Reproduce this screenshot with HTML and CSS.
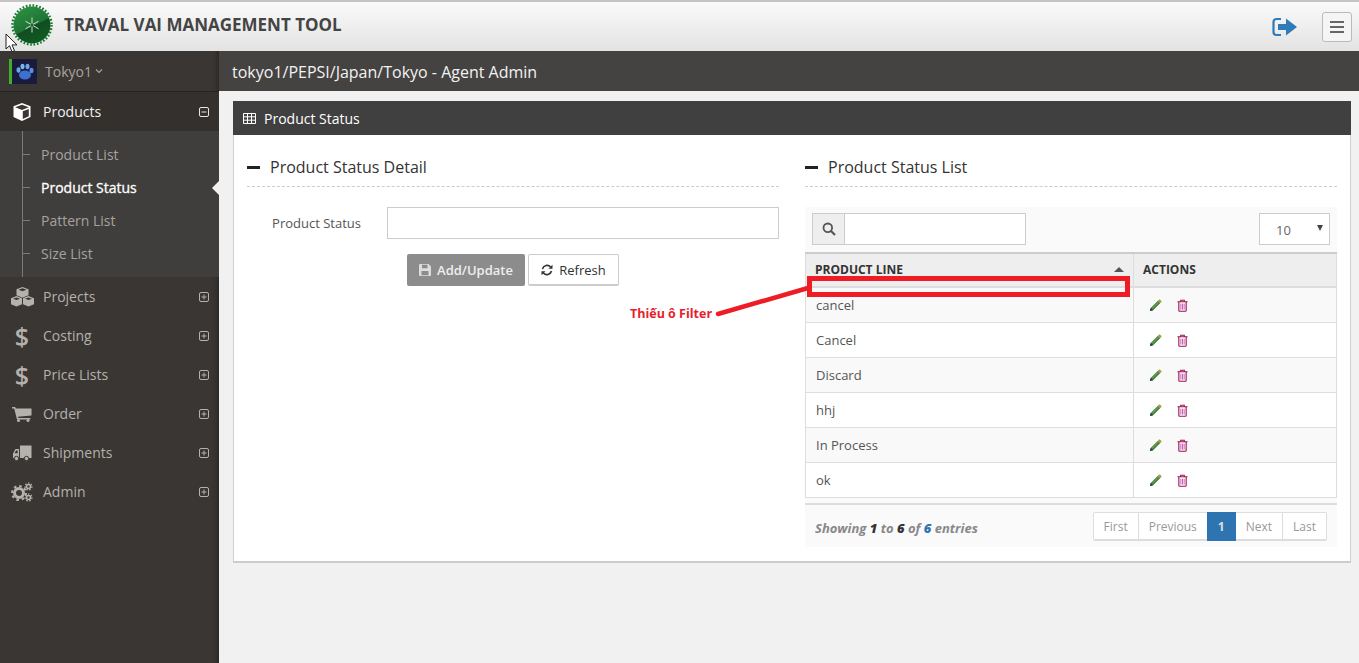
FILE: index.html
```html
<!DOCTYPE html>
<html lang="en">

<head>
  <meta charset="UTF-8">
  <title>Product Status</title>
  <link rel="stylesheet" href="styles.css">
</head>

<body>
  <svg class="defs" width="0" height="0">
    <symbol id="i-plus" viewBox="0 0 10 10">
      <rect x="0.5" y="0.5" width="9" height="9" rx="1.5" fill="none" stroke="currentColor" />
      <path d="M2.5 5h5M5 2.5v5" stroke="currentColor" fill="none" />
    </symbol>
    <symbol id="i-pencil" viewBox="0 0 14 14">
      <path d="M1 13l.8-3.4L9.6 1.8l2.6 2.6-7.8 7.8z" fill="#3c7a3e" />
      <path d="M3 9.5l6.8-6.8 1 1L4 10.5z" fill="#6f9a4a" />
      <path d="M9.6 1.8l1-1c.4-.4 1-.4 1.4 0l1.2 1.2c.4.4.4 1 0 1.4l-1 1z" fill="#a8a03c" />
      <path d="M1 13l.8-3.4 2.6 2.6z" fill="#24452a" />
    </symbol>
    <symbol id="i-trash" viewBox="0 0 12 14">
      <path d="M.5 3h11M4 3V1.2h4V3" fill="none" stroke="#a0124e" stroke-width="1.1" />
      <path d="M2 3.2v9.2c0 .5.3.9.8.9h6.4c.5 0 .8-.4.8-.9V3.2" fill="none" stroke="#a0124e" stroke-width="1.2" />
      <path d="M4.2 5v6.5M6 5v6.5M7.8 5v6.5" stroke="#c054b4" stroke-width="1" />
    </symbol>
  </svg>

  <header class="topbar">
    <svg class="logo" width="46" height="46" viewBox="0 0 46 46">
      <defs>
        <linearGradient id="badge" x1="0.2" y1="0" x2="0.7" y2="1">
          <stop offset="0" stop-color="#2b9142" />
          <stop offset="0.55" stop-color="#1f7434" />
          <stop offset="0.56" stop-color="#114d20" />
          <stop offset="1" stop-color="#0f5c22" />
        </linearGradient>
      </defs>
      <circle cx="23" cy="23" r="18.5" fill="url(#badge)" />
      <circle cx="23" cy="23" r="19.5" fill="none" stroke="#1b7a33" stroke-width="2.5" stroke-dasharray="1.7 1.7" />
      <path d="M23 15.5v15M16.5 19.2l13 7.6M16.5 26.8l13-7.6" stroke="#d4dfd5" stroke-width="1" />
      <circle cx="23" cy="23" r="1.5" fill="#2a5a34" />
    </svg>
    <h1 class="brand">TRAVAL VAI MANAGEMENT TOOL</h1>
    <div class="topbar-actions">
      <svg class="signout" width="26" height="20" viewBox="0 0 26 20">
        <path d="M9 2H4.5A3 3 0 0 0 1.5 5v10a3 3 0 0 0 3 3H9" fill="none" stroke="#2f7ab8" stroke-width="2.2" />
        <path d="M6 7h8V1.5L25 10 14 18.5V13H6z" fill="#2f7ab8" />
      </svg>
      <button class="menu-btn">
        <span></span><span></span><span></span>
      </button>
    </div>
  </header>

  <div class="layout">
    <aside class="sidebar">
      <div class="user">
        <svg class="avatar" width="25" height="25" viewBox="0 0 25 25">
          <rect width="25" height="25" fill="#1a1a3c" />
          <ellipse cx="13" cy="16" rx="6" ry="4.5" fill="#3f6fd0" />
          <ellipse cx="6.5" cy="11" rx="2" ry="2.8" fill="#6aa8e8" />
          <ellipse cx="10.5" cy="7.5" rx="2" ry="2.8" fill="#7ab8f0" />
          <ellipse cx="15.5" cy="7.5" rx="2" ry="2.8" fill="#6aa8e8" />
          <ellipse cx="19.5" cy="11.5" rx="2" ry="2.8" fill="#5a90dc" />
        </svg>
        <span class="user-name">Tokyo1</span>
        <svg class="chevron" width="8" height="6" viewBox="0 0 8 6">
          <path d="M1 1.5l3 3 3-3" fill="none" stroke="#a8a4a0" stroke-width="1.2" />
        </svg>
      </div>

      <nav>
        <div class="nav-item nav-open">
          <span class="nav-icon">
            <svg width="22" height="20" viewBox="0 0 22 20">
              <path d="M11 1l8.5 3.3v10.800L11 19l-8.5-3.900V4.300z" fill="#fff" />
              <path d="M4.200 5.200L11 7.900l6.800-2.700L11 2.800zM11.800 9.300v7.700l6-2.800V6.900z" fill="#3a3633" />
            </svg>
          </span>
          <span class="nav-label">Products</span>
          <svg class="nav-toggle" width="10" height="10" viewBox="0 0 10 10">
            <rect x="0.5" y="0.5" width="9" height="9" rx="1.5" fill="none" stroke="currentColor" />
            <path d="M2.5 5h5" stroke="currentColor" />
          </svg>
        </div>
        <ul class="subnav">
          <li>Product List</li>
          <li class="active">Product Status</li>
          <li>Pattern List</li>
          <li>Size List</li>
        </ul>

        <div class="nav-item">
          <span class="nav-icon">
            <svg width="25" height="20" viewBox="0 0 25 20">
              <path d="M12.5 0l6 2.3v6l-6 2.4-6-2.4v-6z" fill="currentColor" />
              <path d="M6.5 9l5.5 2.2v6L6.5 19.5 1 17.2v-6zM18.5 9l5.5 2.2v6l-5.5 2.3-5.5-2.3v-6z" fill="currentColor" />
              <path d="M8.5 2.700l4 1.500 4-1.500-4-1.400zM3 11.700l3.500 1.400 3.500-1.400-3.500-1.300zM15 11.700l3.500 1.400 3.500-1.400-3.500-1.300z" fill="#3a3633" />
            </svg>
          </span>
          <span class="nav-label">Projects</span>
          <svg class="nav-toggle" width="10" height="10"><use href="#i-plus" /></svg>
        </div>
        <div class="nav-item">
          <span class="nav-icon nav-dollar">$</span>
          <span class="nav-label">Costing</span>
          <svg class="nav-toggle" width="10" height="10"><use href="#i-plus" /></svg>
        </div>
        <div class="nav-item">
          <span class="nav-icon nav-dollar">$</span>
          <span class="nav-label">Price Lists</span>
          <svg class="nav-toggle" width="10" height="10"><use href="#i-plus" /></svg>
        </div>
        <div class="nav-item">
          <span class="nav-icon">
            <svg width="20" height="16" viewBox="0 0 20 16">
              <path d="M0 1h3.2l.6 1.600H19.500v7l-13.500 1.200.3 1.200h12v1.500H5L2.200 2.500H0z" fill="currentColor" />
              <circle cx="6.5" cy="14.5" r="1.5" fill="currentColor" />
              <circle cx="16" cy="14.5" r="1.5" fill="currentColor" />
            </svg>
          </span>
          <span class="nav-label">Order</span>
          <svg class="nav-toggle" width="10" height="10"><use href="#i-plus" /></svg>
        </div>
        <div class="nav-item">
          <span class="nav-icon">
            <svg width="20" height="16" viewBox="0 0 20 16">
              <path d="M8 .5h11.500v12.500H8zM7 4v9H1V8.500L3.500 4z" fill="currentColor" />
              <path d="M2.500 8.200l1.600-2.800h1.600v2.800z" fill="#3a3633" />
              <circle cx="4.5" cy="13.5" r="2.2" fill="currentColor" stroke="#3a3633" />
              <circle cx="14.5" cy="13.5" r="2.2" fill="currentColor" stroke="#3a3633" />
            </svg>
          </span>
          <span class="nav-label">Shipments</span>
          <svg class="nav-toggle" width="10" height="10"><use href="#i-plus" /></svg>
        </div>
        <div class="nav-item">
          <span class="nav-icon">
            <svg width="22" height="20" viewBox="0 0 22 20">
              <circle cx="8" cy="11" r="4.5" fill="none" stroke="currentColor" stroke-width="3" />
              <circle cx="8" cy="11" r="7" fill="none" stroke="currentColor" stroke-width="2" stroke-dasharray="2.6 2.9" />
              <circle cx="17.5" cy="4.5" r="2" fill="none" stroke="currentColor" stroke-width="1.6" />
              <circle cx="17.5" cy="4.5" r="3.5" fill="none" stroke="currentColor" stroke-width="1.2" stroke-dasharray="1.5 1.6" />
              <circle cx="17.5" cy="15.5" r="2" fill="none" stroke="currentColor" stroke-width="1.6" />
              <circle cx="17.5" cy="15.5" r="3.5" fill="none" stroke="currentColor" stroke-width="1.2" stroke-dasharray="1.5 1.6" />
            </svg>
          </span>
          <span class="nav-label">Admin</span>
          <svg class="nav-toggle" width="10" height="10"><use href="#i-plus" /></svg>
        </div>
      </nav>
    </aside>

    <main class="content">
      <div class="crumb">tokyo1/PEPSI/Japan/Tokyo - Agent Admin</div>

      <section class="panel">
        <div class="panel-head">
          <svg width="13" height="11" viewBox="0 0 13 11">
            <path d="M.5.5h12v10H.5zM.5 3.800h12M.5 7.200h12M4.500.5v10M8.500.5v10" fill="none" stroke="#fff" />
          </svg>
          Product Status
        </div>

        <div class="panel-body">
          <div class="col">
            <h2 class="col-title"><span class="dash"></span>Product Status Detail</h2>
            <div class="form-row">
              <label class="form-label" for="status">Product Status</label>
              <input class="form-input" id="status" type="text">
            </div>
            <div class="form-actions">
              <button class="btn btn-save">
                <svg width="12" height="12" viewBox="0 0 12 12">
                  <path d="M0 1a1 1 0 0 1 1-1h8.500L12 2.500V11a1 1 0 0 1-1 1H1a1 1 0 0 1-1-1z" fill="#ddd" />
                  <path d="M3 .8h5.500v3.400H3zM2.500 7h7v4.200h-7z" fill="#8c8c8c" />
                </svg>
                Add/Update
              </button>
              <button class="btn btn-refresh">
                <svg width="12" height="12" viewBox="0 0 12 12">
                  <path d="M1.500 5A4.700 4.700 0 0 1 9.600 3M10.500 7A4.700 4.700 0 0 1 2.400 9" fill="none" stroke="#333" stroke-width="1.6" />
                  <path d="M11.500.8v4h-4zM.5 11.200v-4h4z" fill="#333" />
                </svg>
                Refresh
              </button>
            </div>
          </div>

          <div class="col">
            <h2 class="col-title"><span class="dash"></span>Product Status List</h2>
            <div class="grid-box">
              <div class="grid-tools">
                <div class="search">
                  <span class="search-addon">
                    <svg width="14" height="14" viewBox="0 0 14 14">
                      <circle cx="5.8" cy="5.8" r="4.3" fill="none" stroke="#555" stroke-width="1.8" />
                      <path d="M9 9l4 4" stroke="#555" stroke-width="2.2" />
                    </svg>
                  </span>
                  <input class="search-input" type="text">
                </div>
                <div class="page-size">10<span class="caret"></span></div>
              </div>

              <table class="grid">
                <thead>
                  <tr>
                    <th class="col-name">PRODUCT LINE<span class="sort"></span></th>
                    <th>ACTIONS</th>
                  </tr>
                </thead>
                <tbody>
                  <tr>
                    <td>cancel</td>
                    <td class="actions"><svg width="13" height="13"><use href="#i-pencil" /></svg><svg width="11" height="13"><use href="#i-trash" /></svg></td>
                  </tr>
                  <tr>
                    <td>Cancel</td>
                    <td class="actions"><svg width="13" height="13"><use href="#i-pencil" /></svg><svg width="11" height="13"><use href="#i-trash" /></svg></td>
                  </tr>
                  <tr>
                    <td>Discard</td>
                    <td class="actions"><svg width="13" height="13"><use href="#i-pencil" /></svg><svg width="11" height="13"><use href="#i-trash" /></svg></td>
                  </tr>
                  <tr>
                    <td>hhj</td>
                    <td class="actions"><svg width="13" height="13"><use href="#i-pencil" /></svg><svg width="11" height="13"><use href="#i-trash" /></svg></td>
                  </tr>
                  <tr>
                    <td>In Process</td>
                    <td class="actions"><svg width="13" height="13"><use href="#i-pencil" /></svg><svg width="11" height="13"><use href="#i-trash" /></svg></td>
                  </tr>
                  <tr>
                    <td>ok</td>
                    <td class="actions"><svg width="13" height="13"><use href="#i-pencil" /></svg><svg width="11" height="13"><use href="#i-trash" /></svg></td>
                  </tr>
                </tbody>
              </table>

              <div class="grid-foot">
                <div class="info">Showing <b>1</b> to <b>6</b> of <b class="blue">6</b> entries</div>
                <div class="pager">
                  <a>First</a>
                  <a>Previous</a>
                  <a class="current">1</a>
                  <a>Next</a>
                  <a>Last</a>
                </div>
              </div>
            </div>
          </div>
        </div>
      </section>
    </main>
  </div>

  <!-- screenshot annotation drawn over the page -->
  <svg class="markup" width="540" height="60" viewBox="0 0 540 60">
    <rect x="217.5" y="3.5" width="318" height="16" fill="none" stroke="#ee1c25" stroke-width="5" />
    <path d="M126 39L216 13" stroke="#ee1c25" stroke-width="4.5" stroke-linecap="round" />
  </svg>
  <div class="markup-note">Thiếu ô Filter</div>

  <svg class="cursor" width="16" height="20" viewBox="0 0 16 20">
    <path d="M1 1v15l3.500-3.300 2.500 6 2.500-1-2.500-5.800h5z" fill="#fff" stroke="#222" />
  </svg>
</body>

</html>
```

FILE: styles.css
```css
* {
  box-sizing: border-box;
}

body {
  margin: 0;
  height: 663px;
  overflow: hidden;
  font-family: "Open Sans", sans-serif;
  font-size: 13px;
  color: #555;
  background-color: #f1f1f1;
}

.defs {
  display: block;
  height: 0;
}

.topbar {
  display: flex;
  align-items: center;
  height: 51px;
  padding-left: 9px;
  border-top: 2px solid #c4c4c4;
  background: linear-gradient(#fafafa, #e3e3e3);
}

.logo {
  flex: none;
  margin-bottom: 4px;
}

.brand {
  margin: 0 0 4px 9px;
  font-size: 17px;
  font-weight: 700;
  color: #444;
}

.topbar-actions {
  display: flex;
  align-items: center;
  margin-left: auto;
  padding-right: 7px;
  gap: 24px;
}

.menu-btn {
  display: flex;
  flex-direction: column;
  justify-content: center;
  gap: 3px;
  width: 30px;
  height: 30px;
  padding: 0 7px;
  border: 1px solid #bbb;
  border-radius: 3px;
  background-color: #f5f5f5;
}

.menu-btn span {
  display: block;
  height: 2px;
  background-color: #666;
}

.layout {
  display: flex;
  height: 612px;
}

.sidebar {
  flex: none;
  width: 219px;
  color: #b5b1ad;
  background-color: #3a3633;
  box-shadow: inset -6px 0 6px -6px rgba(0, 0, 0, 0.5);
}

.user {
  display: flex;
  align-items: center;
  height: 41px;
  padding-left: 9px;
  border-bottom: 1px solid #262422;
}

.avatar {
  box-sizing: content-box;
  border-left: 3px solid #3fae2a;
}

.user-name {
  margin: 0 3px 0 8px;
  font-size: 14px;
  color: #a8a4a0;
}

.nav-item {
  display: flex;
  align-items: center;
  height: 39px;
  padding-right: 10px;
  font-size: 14px;
}

.nav-open {
  color: #fff;
  background-color: #34302d;
}

.nav-open .nav-label {
  color: #f2f2f2;
}

.nav-open .nav-toggle {
  color: #e8e8e8;
}

.nav-icon {
  display: flex;
  justify-content: center;
  width: 43px;
  padding-left: 1px;
}

.nav-dollar {
  font-size: 25px;
  font-weight: 600;
  line-height: 22px;
}

.nav-label {
  flex: 1;
}

.subnav {
  position: relative;
  margin: 0;
  padding: 7px 0;
  list-style: none;
  font-size: 14px;
  color: #a5a2a0;
  background-color: #403e3c;
}

.subnav::before {
  content: "";
  position: absolute;
  top: 0;
  bottom: 0;
  left: 22px;
  width: 1px;
  background-color: #7d7b79;
}

.subnav li {
  position: relative;
  height: 33px;
  padding-left: 41px;
  line-height: 33px;
}

.subnav li::before {
  content: "";
  position: absolute;
  top: 16px;
  left: 23px;
  width: 7px;
  height: 1px;
  background-color: #7d7b79;
}

.subnav .active {
  color: #fff;
  -webkit-text-stroke: 0.3px #fff;
}

.subnav .active::after {
  content: "";
  position: absolute;
  top: 10px;
  right: 0;
  border: 7px solid transparent;
  border-left-width: 0;
  border-right-color: #f1f1f1;
}

.content {
  flex: 1;
  min-width: 0;
}

.crumb {
  height: 40px;
  padding-left: 13px;
  font-size: 16px;
  line-height: 42px;
  color: #f2f2f2;
  background-color: #454341;
}

.panel {
  margin: 10px 8px 0 14px;
  height: 462px;
  background-color: #fff;
  border: 1px solid #d0d0d0;
  border-top: 0;
  border-bottom: 2px solid #ccc;
}

.panel-head {
  display: flex;
  align-items: center;
  gap: 8px;
  height: 34px;
  margin: 0 -1px;
  padding-left: 10px;
  font-size: 14px;
  color: #fff;
  background-color: #404040;
}

.panel-body {
  display: flex;
  gap: 26px;
  padding: 0 13px;
}

.col {
  flex: 1;
  min-width: 0;
}

.col-title {
  display: flex;
  align-items: center;
  height: 52px;
  margin: 0 0 20px;
  padding-top: 13px;
  font-size: 16px;
  font-weight: 400;
  color: #333;
  border-bottom: 1px dashed #ccc;
}

.dash {
  width: 13px;
  height: 3px;
  margin-right: 10px;
  background-color: #222;
}

.form-row {
  display: flex;
  align-items: center;
}

.form-label {
  width: 114px;
  text-align: right;
  font-size: 13px;
}

.form-input {
  flex: 1;
  height: 32px;
  margin-left: 26px;
  border: 1px solid #ccc;
}

.form-actions {
  display: flex;
  gap: 3px;
  margin: 15px 0 0 160px;
}

.btn {
  display: flex;
  align-items: center;
  justify-content: center;
  gap: 6px;
  height: 32px;
  padding: 0;
  border-radius: 2px;
  font-family: inherit;
  font-size: 13px;
}

.btn-save {
  width: 118px;
  font-weight: 600;
  color: #eee;
  background-color: #8c8c8c;
  border: 0;
}

.btn-refresh {
  width: 91px;
  color: #333;
  background-color: #fff;
  border: 1px solid #ccc;
  border-bottom-width: 2px;
}

.grid-box {
  height: 340px;
  background-color: #fafafa;
}

.grid-tools {
  display: flex;
  align-items: flex-start;
  justify-content: space-between;
  height: 45px;
  padding: 6px 7px 0 7px;
}

.search {
  display: flex;
  width: 214px;
  height: 32px;
  border: 1px solid #ccc;
}

.search-addon {
  display: flex;
  align-items: center;
  justify-content: center;
  width: 32px;
  border-right: 1px solid #ccc;
  background-color: #eee;
}

.search-input {
  flex: 1;
  min-width: 0;
  border: 0;
  background-color: #fff;
}

.page-size {
  position: relative;
  width: 71px;
  height: 32px;
  padding-left: 16px;
  font-size: 13px;
  line-height: 33px;
  color: #666;
  border: 1px solid #ccc;
  background-color: #fff;
}

.caret {
  position: absolute;
  top: 11px;
  right: 6px;
  border: 3.5px solid transparent;
  border-top: 6px solid #444;
  border-bottom: 0;
}

.grid {
  width: 100%;
  border-collapse: collapse;
  table-layout: fixed;
  background-color: #fff;
}

.grid th {
  position: relative;
  height: 34px;
  padding: 0 9px 2px;
  text-align: left;
  font-size: 12px;
  font-weight: 700;
  color: #333;
  background-color: #eee;
  border: 1px solid #ddd;
  border-top: 2px solid #ccc;
  border-bottom-width: 2px;
}

.col-name {
  width: 328px;
}

.sort {
  position: absolute;
  top: 13px;
  right: 9px;
  border: 5px solid transparent;
  border-top: 0;
  border-bottom-color: #555;
}

.grid td {
  height: 35px;
  padding: 0 10px;
  font-size: 13px;
  color: #555;
  border: 1px solid #ddd;
}

.grid tbody tr:nth-child(odd) td {
  background-color: #f9f9f9;
}

.actions svg {
  vertical-align: -2px;
  margin: 0 0 0 5px;
}

.actions svg + svg {
  margin-left: 15px;
}

.grid-foot {
  display: flex;
  align-items: flex-start;
  justify-content: space-between;
  margin-top: 5px;
  padding: 7px 10px 0;
  border-top: 2px solid #ddd;
}

.info {
  margin-top: 7px;
  font-size: 13px;
  font-style: italic;
  font-weight: 700;
  color: #888;
}

.info b {
  color: #333;
}

.info .blue {
  color: #2e74b0;
}

.pager {
  display: flex;
  height: 29px;
  font-size: 12px;
  color: #999;
  background-color: #fff;
  border: 1px solid #ddd;
  border-bottom-width: 2px;
  border-radius: 2px;
}

.pager a {
  padding: 0 10px;
  line-height: 27px;
  border-left: 1px solid #ddd;
}

.pager a:first-child {
  border-left: 0;
}

.pager .current {
  margin: -1px 0 -2px;
  padding: 1px 11px;
  font-weight: 700;
  color: #ddd;
  background-color: #2e74b0;
  border-left: 0;
}

.pager .current + a {
  border-left: 0;
}

.markup {
  position: absolute;
  top: 275px;
  left: 592px;
}

.markup-note {
  position: absolute;
  top: 305px;
  left: 630px;
  font-size: 12.5px;
  font-weight: 700;
  color: #e8202a;
}

.cursor {
  position: absolute;
  top: 33px;
  left: 5px;
}
```
